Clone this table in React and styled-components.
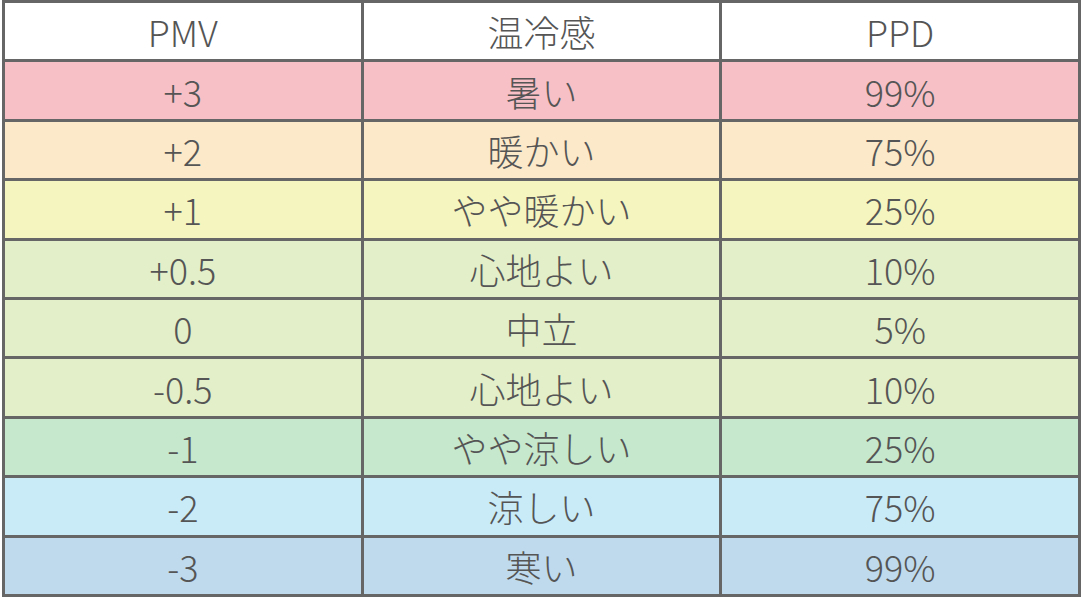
import styled, { createGlobalStyle } from "styled-components"

const GlobalStyle = createGlobalStyle`
  html, body {
    margin: 0;
    padding: 0;
    background: #fff;
  }
`

const rows = [
  { pmv: "+3", feel: "暑い", ppd: "99%", bg: "#f7c0c6" },
  { pmv: "+2", feel: "暖かい", ppd: "75%", bg: "#fbe9c9" },
  { pmv: "+1", feel: "やや暖かい", ppd: "25%", bg: "#f5f5c0" },
  { pmv: "+0.5", feel: "心地よい", ppd: "10%", bg: "#e3efc8" },
  { pmv: "0", feel: "中立", ppd: "5%", bg: "#e3efc8" },
  { pmv: "-0.5", feel: "心地よい", ppd: "10%", bg: "#e3efc8" },
  { pmv: "-1", feel: "やや涼しい", ppd: "25%", bg: "#c6e8cd" },
  { pmv: "-2", feel: "涼しい", ppd: "75%", bg: "#c9ebf8" },
  { pmv: "-3", feel: "寒い", ppd: "99%", bg: "#bfdaec" },
]

export default function App() {
  return (
    <>
      <GlobalStyle />
      <Wrapper>
        <Table>
          <thead>
            <tr>
              <Th>PMV</Th>
              <Th>温冷感</Th>
              <Th>PPD</Th>
            </tr>
          </thead>
          <tbody>
            {rows.map(row => (
              <Row key={row.pmv} $bg={row.bg}>
                <Td>{row.pmv}</Td>
                <Td>{row.feel}</Td>
                <Td>{row.ppd}</Td>
              </Row>
            ))}
          </tbody>
        </Table>
      </Wrapper>
    </>
  )
}

const Wrapper = styled.div`
  padding: 0 1px 0 2px;
  width: 1082px;
  height: 598px;
  box-sizing: border-box;
`
const Table = styled.table`
  width: 100%;
  table-layout: fixed;
  border-collapse: collapse;
  font-family: "Noto Sans CJK JP", "Noto Sans", sans-serif;
  font-weight: 300;
  font-size: 36px;
  color: #555;
`
const Th = styled.th`
  height: 56.4px;
  padding: 0;
  border: 3px solid #666;
  background: #fff;
  font-weight: 300;
  text-align: center;
  line-height: 1;
`
const Row = styled.tr`
  background: ${(props) => props.$bg};
`
const Td = styled.td`
  height: 56.4px;
  padding: 0;
  border: 3px solid #666;
  text-align: center;
  line-height: 1;
`
